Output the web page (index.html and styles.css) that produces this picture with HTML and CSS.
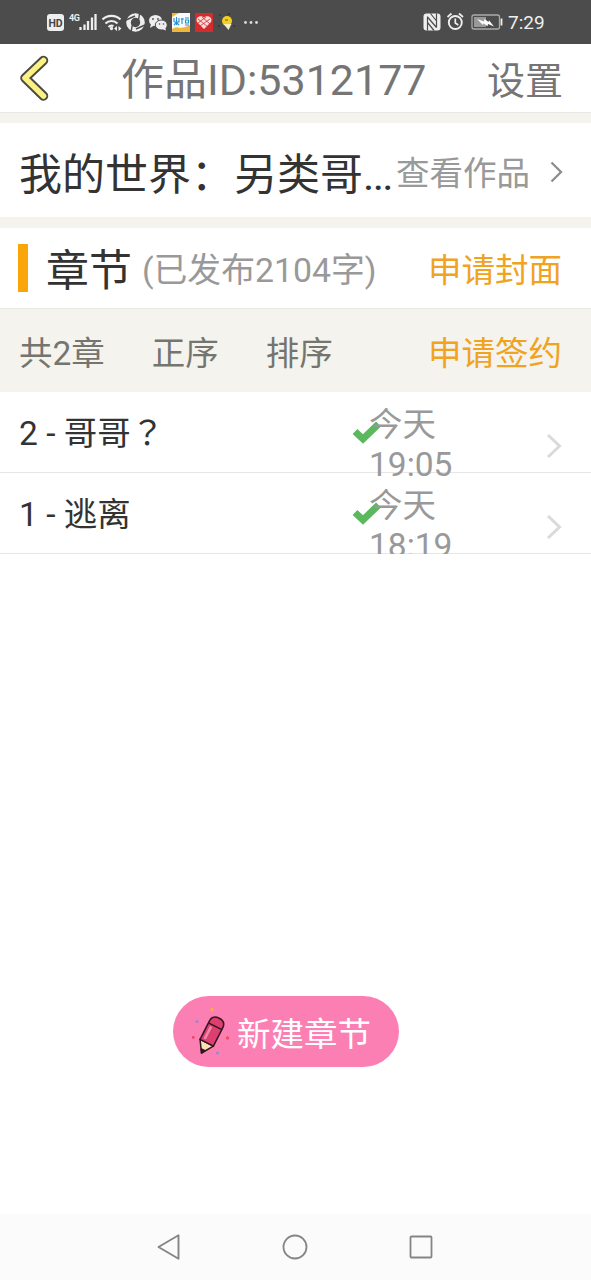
FILE: index.html
```html
<!DOCTYPE html>
<html lang="zh-CN">
<head>
<meta charset="utf-8">
<title>作品管理</title>
<link rel="stylesheet" href="styles.css">
</head>
<body>
<div class="screen">
  <div class="status">
    <svg class="status-icons" width="225" height="44" viewBox="40 0 225 44">
      <rect x="47" y="14" width="17" height="17" rx="3" fill="#eee"/>
      <text x="55.500" y="26.500" class="hd">HD</text>
      <text x="69" y="21" class="net">4G</text>
      <path d="M80.500 27v3M84.500 24.500v5.500M88 21v9M92 17.500V30M95.500 14v16" stroke="#eee" stroke-width="2.300"/>
      <g fill="none" stroke="#eee" stroke-width="2.200">
        <path d="M102.500 19.500a13 13 0 0 1 18 0M105.500 23.500a8.500 8.500 0 0 1 12 0M108.500 27a4.500 4.500 0 0 1 5-1"/>
      </g>
      <circle cx="111.500" cy="28.500" r="1.700" fill="#eee"/>
      <path d="M114 28.500l3-2.500v5zM121.500 28.500l-3-2.500v5z" fill="#eee"/>
      <circle cx="135.500" cy="22.500" r="7" fill="none" stroke="#eee" stroke-width="4.600"/>
      <path d="M126 20l9-4M139.500 13l-1 8M145 25l-9 4M131 32l1.500-8" stroke="#4c4c4c" stroke-width="1.400"/>
      <ellipse cx="155.500" cy="20.500" rx="6.500" ry="5.500" fill="#eee"/>
      <path d="M151 24l-1 4 4-2.500z" fill="#eee"/>
      <ellipse cx="161.300" cy="25" rx="6" ry="5" fill="#eee" stroke="#4c4c4c"/>
      <path d="M162 29l4 1.500-1-4z" fill="#eee"/>
      <g fill="#4c4c4c"><circle cx="153" cy="19" r=".9"/><circle cx="158" cy="19" r=".9"/><circle cx="159.500" cy="24" r=".8"/><circle cx="163.500" cy="24" r=".8"/></g>
      <rect x="172" y="13" width="18" height="19" fill="#f8f9fa"/>
      <path d="M172 13h7l-7 4zM172 29q4-3 8-1 5 0 10-3v7h-18z" fill="#efb63c"/>
      <path d="M174 18v4M176.500 17v8M179 18v4M174 22h5.500M174 25l2-2M179 25l-2-2M182 18v6M181 19h3M185 18h4M185.500 20h3v3h-3zM185 25h4" stroke="#2791cf" stroke-width="1.100" fill="none"/>
      <rect x="195" y="13" width="18" height="19" fill="#d42b2c"/>
      <path d="M204 29l-7-7q-1.500-4 2-5.500 3-1 5 1 2-2 5-1 3.500 1.500 2 5.500z" fill="#f8dcd8"/>
      <path d="M198 19l10 8M202 17l8 7M210 19l-10 7M206 17l-8 6" stroke="#d42b2c" stroke-width=".8"/>
      <circle cx="227" cy="21" r="5" fill="#f3cf22"/>
      <path d="M223.500 24l5 6 3-6z" fill="#f7edc9"/>
      <path d="M225 20h3" stroke="#755c12"/>
      <g fill="#222"><circle cx="220" cy="15" r=".8"/><circle cx="229" cy="14" r=".8"/><circle cx="219" cy="26" r=".8"/><circle cx="234" cy="26" r=".8"/></g>
      <g fill="#ddd"><circle cx="245.500" cy="22.500" r="1.400"/><circle cx="251" cy="22.500" r="1.400"/><circle cx="256.500" cy="22.500" r="1.400"/></g>
    </svg>
    <svg class="status-right" width="84" height="44" viewBox="420 0 84 44">
      <rect x="423.500" y="13.500" width="17" height="17" rx="3" fill="#eee"/>
      <path d="M427.500 30.500V16.500M436.500 27.500V13.500M430.500 13.500l6 7.500M427.500 17l9 10.500M427.500 22.500l6.500 8" fill="none" stroke="#4c4c4c" stroke-width="1.200"/>
      <circle cx="455.300" cy="22.500" r="6.500" fill="none" stroke="#eee" stroke-width="1.900"/>
      <path d="M455.300 18.500v4.500l3 2M447.500 17l4-3.500M463 17l-4-3.500" fill="none" stroke="#eee" stroke-width="1.700"/>
      <rect x="472" y="15" width="27.500" height="14" rx="2" fill="none" stroke="#aaa" stroke-width="1.300"/>
      <rect x="474" y="17" width="12" height="10" fill="#999"/>
      <path d="M477 19l7 2.500.5-2.500 4 3 .5-1.800 5 6.300-6-2.500-.5 2.300-4-3-.5 1.700z" fill="#fff"/>
      <path d="M501.500 18.500v7" stroke="#eee" stroke-width="1.800"/>
    </svg>
    <span class="clock">7:29</span>
  </div>

  <header class="header">
    <svg class="back" width="32" height="48" viewBox="18 54 32 48" fill="none" stroke-linecap="round" stroke-linejoin="round">
      <path d="M43.500 60.500L25 78l18.500 18" stroke="#4b4a43" stroke-width="9.500"/>
      <path d="M43.500 60.500L25 78l18.500 18" stroke="#fcf283" stroke-width="5.600"/>
    </svg>
    <h1 class="title">作品ID:5312177</h1>
    <span class="settings">设置</span>
  </header>

  <div class="work">
    <span class="work-name">我的世界：另类哥<span class="dots">...</span></span>
    <span class="work-link">查看作品</span>
    <svg class="work-arrow" width="16" height="24" viewBox="0 0 16 24"><path d="M2.500 2.500L12 12l-9.500 9.500" fill="none" stroke="#8e8e8e" stroke-width="2.300"/></svg>
  </div>

  <div class="section">
    <span class="mark"></span>
    <span class="section-name">章节</span>
    <span class="count">(已发布2104字)</span>
    <span class="action">申请封面</span>
  </div>

  <div class="toolbar">
    <span class="total">共2章</span>
    <span class="order">正序</span>
    <span class="sort">排序</span>
    <span class="action">申请签约</span>
  </div>

  <div class="list">
    <div class="row">
      <span class="name">2 - 哥哥<span class="mid" lang="zh-TW">？</span></span>
      <svg class="check" width="30" height="24" viewBox="0 0 30 24"><path d="M3 11.500l8 7.500L26.500 4" fill="none" stroke="#5cb85c" stroke-width="7"/></svg>
      <span class="time">今天<br>19:05</span>
      <svg class="arrow" width="18" height="28" viewBox="0 0 18 28"><path d="M3 3l11.500 11L3 25" fill="none" stroke="#dadada" stroke-width="3"/></svg>
    </div>
    <div class="row">
      <span class="name">1 - 逃离</span>
      <svg class="check" width="30" height="24" viewBox="0 0 30 24"><path d="M3 11.500l8 7.500L26.500 4" fill="none" stroke="#5cb85c" stroke-width="7"/></svg>
      <span class="time">今天<br>18:19</span>
      <svg class="arrow" width="18" height="28" viewBox="0 0 18 28"><path d="M3 3l11.500 11L3 25" fill="none" stroke="#dadada" stroke-width="3"/></svg>
    </div>
  </div>

  <div class="stage">
    <div class="create">
      <svg class="pencil" width="44" height="50" viewBox="188 1006 44 50">
        <g transform="translate(201.500 1052) rotate(27)" stroke="#33161f" stroke-width="1.500" stroke-linejoin="round">
          <path d="M0 0L-7.500-11.500H7.500z" fill="#fbe0b5"/>
          <path d="M-7.500-11.500V-32q0-7 7.500-7t7.500 7v20.500z" fill="#dc3f70"/>
          <path d="M-7.500-30h15" fill="none"/>
          <path d="M-3.500-14v-14" stroke="#f08aac" stroke-width="2.500"/>
          <path d="M0 0l-2-3.500h4z" fill="#33161f"/>
        </g>
        <circle cx="212" cy="1008.500" r="1.800" fill="#f8a94e"/>
        <circle cx="197" cy="1020.500" r="1.500" fill="#a084cb"/>
        <circle cx="193.300" cy="1036.500" r="1.400" fill="#ec4866"/>
        <circle cx="227.500" cy="1037" r="1.700" fill="#f04d59"/>
        <circle cx="217.500" cy="1052" r="1.500" fill="#8d90d0"/>
      </svg>
      <span>新建章节</span>
    </div>
  </div>

  <div class="nav">
    <svg width="26" height="30" viewBox="0 0 26 30"><path d="M2.500 15L22.500 3.300v23.400z" fill="none" stroke="#858585" stroke-width="1.900" stroke-linejoin="round"/></svg>
    <svg width="28" height="28" viewBox="0 0 28 28"><circle cx="14" cy="14" r="11.500" fill="none" stroke="#858585" stroke-width="1.800"/></svg>
    <svg width="26" height="26" viewBox="0 0 26 26"><rect x="2.500" y="2.500" width="21" height="21" rx="1" fill="none" stroke="#858585" stroke-width="1.800"/></svg>
  </div>
</div>
</body>
</html>
```
FILE: styles.css
```css
* { box-sizing: border-box; }
body {
  margin: 0;
  background: #fff;
  color: #333;
  font-family: Roboto, "Noto Sans CJK SC", sans-serif;
  font-size: 33.5px;
  line-height: 40px;
}
svg { display: block; flex: none; }
span, h1 { white-space: nowrap; }
.screen { width: 591px; height: 1280px; display: flex; flex-direction: column; overflow: hidden; }

.status { height: 44px; flex: none; background: #4c4c4c; color: #eee; display: flex; align-items: center; padding-left: 40px; }
.status-right { margin-left: 155px; }
.clock { margin: 2px 0 0 4px; font-size: 19px; }
.hd { font: bold 10.500px Roboto, sans-serif; fill: #444; text-anchor: middle; }
.net { font: bold 9px Roboto, sans-serif; fill: #eee; letter-spacing: -.5px; }

.header { height: 69px; flex: none; display: flex; align-items: center; padding: 0 28px 0 18px; border-bottom: 1px solid #e9e9e4; color: #757575; }
.title { margin: 4px 0 0 71px; font-size: 43px; font-weight: 400; line-height: 50px; }
.settings { margin: 6px 0 0 auto; font-size: 38px; }

.work { height: 114px; flex: none; display: flex; align-items: center; padding: 0 26px 0 19px; border: solid #f4f3ee; border-width: 10px 0; }
.work-name { width: 377px; margin-top: 9px; font-size: 43px; line-height: 60px; }
.dots { letter-spacing: -1.700px; }
.work-link { margin-top: 8px; color: #999; }
.work-arrow { margin: 3px 0 0 auto; }

.section { height: 81px; flex: none; display: flex; align-items: center; padding: 0 29px 0 18px; border-top: 1px solid #f4f3ee; }
.mark { width: 10px; height: 48px; background: #faa50a; margin-right: 18px; }
.section-name { margin: 6px 10px 0 0; font-size: 43px; line-height: 60px; }
.count { margin-top: 5px; font-size: 33.8px; color: #999; }
.action { margin: 6px 0 0 auto; color: #f0a31f; }

.toolbar { height: 84px; flex: none; display: flex; align-items: center; padding: 7px 29px 0 19px; background: #f4f3ee; border-top: 1px solid #e9e9e4; color: #757570; }
.toolbar .action { margin-top: 0; }
.order, .sort { margin-left: 47px; }

.list { flex: none; height: 162px; overflow: hidden; }
.row { height: 81px; display: flex; align-items: flex-start; border-bottom: 1px solid #e6e6e6; }
.name { width: 333px; margin-left: 19px; padding-top: 22px; }
.mid { font-family: "Noto Sans CJK TC", sans-serif; line-height: 1; }
.check { margin-top: 28px; }
.time { margin: 13px 0 0 -13px; width: 176px; color: #999; position: relative; }
.arrow { margin-top: 40px; }

.stage { flex: 1; display: flex; align-items: flex-end; padding: 0 0 147px 173px; }
.create { width: 226px; height: 71px; border-radius: 36px; background: #fc7fb4; color: #fff; display: flex; align-items: center; padding-left: 15px; }
.create span { margin: 7px 0 0 5px; }

.nav { height: 66px; flex: none; background: #fbfbfb; display: flex; align-items: center; justify-content: space-between; padding: 0 157px 0 156px; }
```
